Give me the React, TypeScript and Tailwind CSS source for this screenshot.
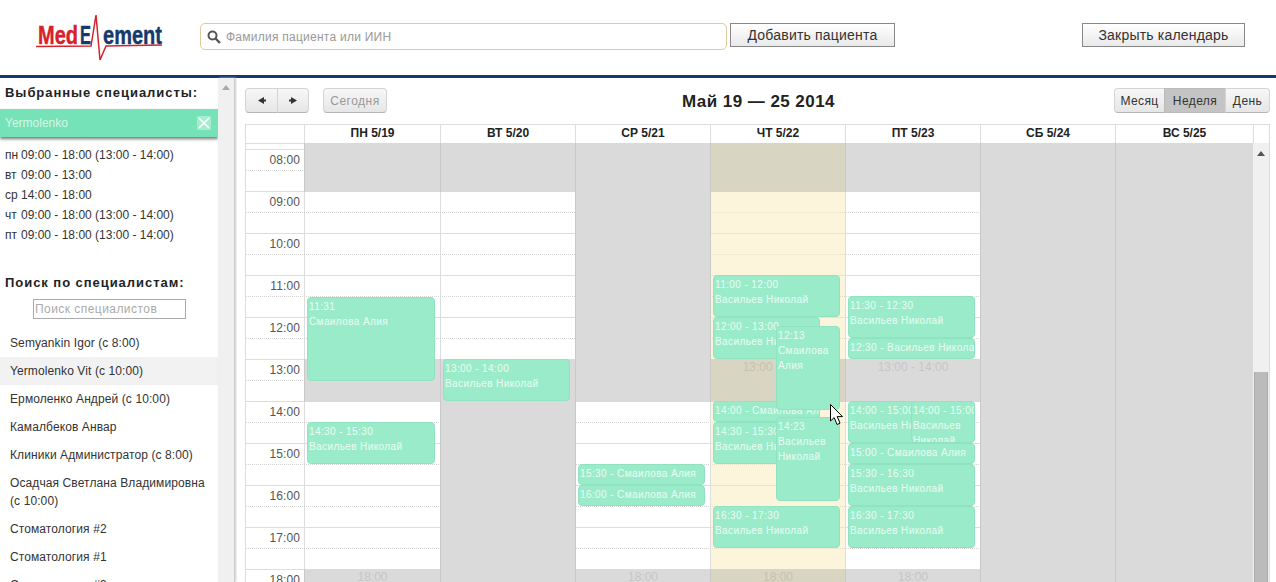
const hours = ["08:00", "09:00", "10:00", "11:00", "12:00", "13:00", "14:00", "15:00", "16:00", "17:00", "18:00"];
const dayNames = ["ПН 5/19", "ВТ 5/20", "СР 5/21", "ЧТ 5/22", "ПТ 5/23", "СБ 5/24", "ВС 5/25"];
const schedule = [
  ["пн", "09:00 - 18:00 (13:00 - 14:00)"],
  ["вт", "09:00 - 13:00"],
  ["ср", "14:00 - 18:00"],
  ["чт", "09:00 - 18:00 (13:00 - 14:00)"],
  ["пт", "09:00 - 18:00 (13:00 - 14:00)"],
];
const doctors = [
  "Semyankin Igor (с 8:00)",
  "Yermolenko Vit (с 10:00)",
  "Ермоленко Андрей (с 10:00)",
  "Камалбеков Анвар",
  "Клиники Администратор (с 8:00)",
  "Осадчая Светлана Владимировна (с 10:00)",
  "Стоматология #2",
  "Стоматология #1",
  "Стоматология #3",
];

// y values are page pixels, the grid body starts at 143
const GRID_TOP = 143;
type Off = { top: number; bottom: number; label?: string };
const offHours: Off[][] = [
  [{ top: 143, bottom: 192 }, { top: 359, bottom: 402, label: "13:00 - 14:00" }, { top: 569, bottom: 582, label: "18:00" }],
  [{ top: 143, bottom: 192 }, { top: 359, bottom: 582 }],
  [{ top: 143, bottom: 402 }, { top: 569, bottom: 582, label: "18:00" }],
  [{ top: 143, bottom: 192 }, { top: 359, bottom: 402, label: "13:00 - 14:00" }, { top: 569, bottom: 582, label: "18:00" }],
  [{ top: 143, bottom: 192 }, { top: 359, bottom: 402, label: "13:00 - 14:00" }, { top: 569, bottom: 582, label: "18:00" }],
  [{ top: 143, bottom: 582 }],
  [{ top: 143, bottom: 582 }],
];

type Ev = { left: number; width: number; top: number; height: number; time: string; name?: string; wrap?: boolean };
const events: Ev[][] = [
  [
    { left: 2, width: 128, top: 297, height: 84, time: "11:31", name: "Смаилова Алия" },
    { left: 2, width: 128, top: 422, height: 42, time: "14:30 - 15:30", name: "Васильев Николай" },
  ],
  [{ left: 2, width: 127, top: 359, height: 42, time: "13:00 - 14:00", name: "Васильев Николай" }],
  [
    { left: 2, width: 127, top: 464, height: 21, time: "15:30 - Смаилова Алия" },
    { left: 2, width: 127, top: 485, height: 21, time: "16:00 - Смаилова Алия" },
  ],
  [
    { left: 2, width: 127, top: 275, height: 42, time: "11:00 - 12:00", name: "Васильев Николай" },
    { left: 2, width: 107, top: 317, height: 42, time: "12:00 - 13:00", name: "Васильев Николай" },
    { left: 2, width: 107, top: 401, height: 21, time: "14:00 - Смаилова Алия" },
    { left: 2, width: 107, top: 422, height: 42, time: "14:30 - 15:30", name: "Васильев Николай" },
    { left: 65, width: 64, top: 326, height: 84, time: "12:13", name: "Смаилова Алия", wrap: true },
    { left: 65, width: 64, top: 417, height: 84, time: "14:23", name: "Васильев Николай", wrap: true },
    { left: 2, width: 127, top: 506, height: 42, time: "16:30 - 17:30", name: "Васильев Николай" },
  ],
  [
    { left: 2, width: 127, top: 296, height: 42, time: "11:30 - 12:30", name: "Васильев Николай" },
    { left: 2, width: 127, top: 338, height: 21, time: "12:30 - Васильев Николай" },
    { left: 2, width: 100, top: 401, height: 42, time: "14:00 - 15:00", name: "Васильев Николай" },
    { left: 65, width: 64, top: 401, height: 42, time: "14:00 - 15:00", name: "Васильев Николай", wrap: true },
    { left: 2, width: 127, top: 443, height: 21, time: "15:00 - Смаилова Алия" },
    { left: 2, width: 127, top: 464, height: 42, time: "15:30 - 16:30", name: "Васильев Николай" },
    { left: 2, width: 127, top: 506, height: 42, time: "16:30 - 17:30", name: "Васильев Николай" },
  ],
  [],
  [],
];

function Logo() {
  return (
    <svg width="134" height="50" viewBox="0 0 134 50" className="shrink-0">
      <path d="M3 33.5 L58 33 L63 2 L67 47 L73 33 L129 32" fill="none" stroke="#d8212a" strokeWidth="1.5" />
      <text x="5" y="31" fontFamily="Liberation Sans" fontWeight="700" fontSize="25" fill="#d8212a" stroke="#d8212a" strokeWidth="0.4" textLength="40" lengthAdjust="spacingAndGlyphs">Med</text>
      <text x="47" y="31" fontFamily="Liberation Sans" fontWeight="700" fontSize="25" fill="#14396c" stroke="#14396c" strokeWidth="0.4" textLength="11" lengthAdjust="spacingAndGlyphs">E</text>
      <text x="70" y="31" fontFamily="Liberation Sans" fontWeight="700" fontSize="25" fill="#14396c" stroke="#14396c" strokeWidth="0.4" textLength="59" lengthAdjust="spacingAndGlyphs">ement</text>
    </svg>
  );
}

function Triangle({ dir }: { dir: "left" | "right" }) {
  return (
    <svg width="8" height="7" viewBox="0 0 8 7">
      <path d={dir === "left" ? "M0 3.5 L6 0 V2.5 H8 V4.5 H6 V7 Z" : "M8 3.5 L2 0 V2.5 H0 V4.5 H2 V7 Z"} fill="#333" />
    </svg>
  );
}

function Sidebar() {
  return (
    <aside className="w-[218px] shrink-0 pt-[7px] text-[12px] text-[#333]">
      <h2 className="pl-[5px] text-[13px] leading-[16px] font-bold tracking-[0.95px] text-[#222]">Выбранные специалисты:</h2>
      <div className="mt-[8px] flex h-[28px] items-center justify-between bg-[#76e2b8] pr-[7px] pl-[5px] text-white/70 shadow-[0_2px_3px_#777]">
        <span>Yermolenko</span>
        <span className="flex h-[14px] w-[14px] items-center justify-center bg-[#a6ecd1]">
          <svg width="12" height="12" viewBox="0 0 12 12">
            <path d="M1 1 L11 11 M11 1 L1 11" stroke="#fff" strokeWidth="1.5" />
          </svg>
        </span>
      </div>
      <div className="mt-[8px] pl-[5px]">
        {schedule.map(([day, time]) => (
          <div key={day} className="flex h-[20px] items-center whitespace-nowrap">
            <span className="w-[16px]">{day}</span>
            <span>{time}</span>
          </div>
        ))}
      </div>
      <h2 className="mt-[30px] pl-[5px] text-[13px] leading-[16px] font-bold tracking-[0.95px] text-[#222]">Поиск по специалистам:</h2>
      <div className="mt-[8px] flex justify-center">
        <input
          readOnly
          placeholder="Поиск специалистов"
          className="ml-[1px] h-[20px] w-[153px] border border-[#aaa] px-[1px] text-[12px] tracking-[0.45px] placeholder:text-[#aaa]"
        />
      </div>
      <ul className="mt-[10px]">
        {doctors.map((d, i) => (
          <li key={d} className={"py-[5px] pl-[10px] leading-[18px] tracking-[0.1px] " + (i === 1 ? "bg-[#f2f2f2]" : "")}>
            {d}
          </li>
        ))}
      </ul>
    </aside>
  );
}

function CalendarToolbar() {
  const btn = "h-[25px] bg-gradient-to-b from-[#f7f7f7] to-[#e6e6e6] border border-[#d4d4d4] border-b-[#b5b5b5] flex items-center justify-center";
  return (
    <div className="relative flex h-[25px] items-start">
      <div className="flex">
        <button className={btn + " w-[33px] rounded-l-[4px]"}><Triangle dir="left" /></button>
        <button className={btn + " -ml-px w-[32px] rounded-r-[4px]"}><Triangle dir="right" /></button>
      </div>
      <button className={btn + " ml-[14px] w-[64px] rounded-[4px] text-[12px] tracking-[0.5px] text-[#999]"}>Сегодня</button>
      <h1 className="flex-1 pl-[16px] text-center text-[17px] leading-[27px] font-bold tracking-[0.45px] text-[#222]">Май 19 — 25 2014</h1>
      <div className="flex text-[12px] tracking-[0.4px] text-[#333]">
        <button className={btn + " w-[51px] rounded-l-[4px]"}>Месяц</button>
        <button className="-ml-px flex h-[25px] w-[62px] items-center justify-center border border-[#bbb] bg-[#c4c4c4]">Неделя</button>
        <button className={btn + " -ml-px w-[45px] rounded-r-[4px]"}>День</button>
      </div>
    </div>
  );
}

function EventCard({ ev }: { ev: Ev }) {
  return (
    <div
      className="absolute overflow-hidden rounded-[4px] border border-[#90e2c1] bg-[#99ebc9] pt-[1px] pl-[1px] text-[10px] leading-[15px] tracking-[0.4px] text-white/80"
      style={{ left: ev.left, width: ev.width, top: ev.top - GRID_TOP, height: ev.height }}
    >
      <div className="whitespace-nowrap">{ev.time}</div>
      {ev.name && <div className={ev.wrap ? "" : "whitespace-nowrap"}>{ev.name}</div>}
    </div>
  );
}

function Calendar() {
  return (
    <div className="mt-[11px] border-x border-t border-[#ddd]">
      <div className="flex h-[18px] text-[12px] leading-[17px] font-bold text-[#222]">
        <div className="w-[59px] shrink-0 border-r border-[#ddd]" />
        <div className="grid grid-cols-[136px_135px_135px_135px_135px_135px_138px]">
          {dayNames.map((n) => (
            <div key={n} className="border-r border-[#ddd] text-center">{n}</div>
          ))}
        </div>
      </div>
      <div className="relative h-[439px] overflow-hidden">
        {/* hour rows */}
        <div className="h-[6px] w-[59px] border-t border-r border-[#ddd]" />
        {hours.map((h) => (
          <div key={h} className="relative h-[42px] border-t border-[#ddd]">
            <div className="h-full w-[59px] border-r border-[#ddd] pr-[4px] text-right text-[12px] leading-[20px] tracking-[0.1px] text-[#555]">{h}</div>
            <div className="absolute top-[20px] right-0 left-0 border-t border-dotted border-[#d4d4d4]" />
          </div>
        ))}
        {/* day columns, on top of the rows */}
        <div className="absolute top-0 bottom-0 left-[59px] grid grid-cols-[136px_135px_135px_135px_135px_135px_138px]">
          {dayNames.map((n, i) => (
            <div key={n} className={"relative border-r border-[#ddd] " + (i === 3 ? "bg-[#f9ecb8]/50" : "")}>
              {offHours[i].map((o) => (
                <div
                  key={o.top}
                  className={
                    "absolute -right-px -left-px border-x border-[#c9c9c9] text-center text-[12px] leading-[17px] " +
                    (i === 3 ? "bg-[#d8d5c3] text-[#c6c2ae]" : "bg-[#dadada] text-[#c6c6c6]")
                  }
                  style={{ top: o.top - GRID_TOP, height: o.bottom - o.top }}
                >
                  {o.label}
                </div>
              ))}
              {events[i].map((ev) => (
                <EventCard key={ev.time + ev.top + ev.left} ev={ev} />
              ))}
            </div>
          ))}
        </div>
        {/* scrollbar */}
        <div className="absolute top-0 right-0 bottom-0 w-[16px] bg-[#f0f0f0]">
          <svg width="8" height="5" viewBox="0 0 8 5" className="absolute top-[8px] left-[4px]">
            <path d="M0 5 L4 0 L8 5 Z" fill="#555" />
          </svg>
          <div className="absolute top-[229px] right-[1px] bottom-0 left-[1px] border-x border-[#aaa] bg-[#bbb]" />
        </div>
      </div>
    </div>
  );
}

export default function App() {
  return (
    <div className="relative h-[582px] w-[1276px] overflow-hidden bg-white font-['Liberation_Sans',Arial,sans-serif]">
      <header className="flex h-[78px] items-start border-b-[3px] border-[#15396f] pt-[13px] pl-[33px]">
        <Logo />
        <div className="mt-[10px] ml-[33px] flex h-[27px] w-[527px] items-center gap-[5px] rounded-[5px] border border-[#dccb9f] pl-[6px]">
          <svg width="14" height="14" viewBox="0 0 14 14">
            <circle cx="5.5" cy="5.5" r="4" fill="none" stroke="#555" strokeWidth="2" />
            <path d="M8.5 8.5 L13 13" stroke="#555" strokeWidth="2.4" />
          </svg>
          <span className="text-[12px] tracking-[0.25px] text-[#999]">Фамилия пациента или ИИН</span>
        </div>
        <button className="mt-[10px] ml-[3px] h-[24px] w-[165px] border border-[#888] bg-gradient-to-b from-white to-[#e9e9e9] text-[14px] tracking-[0.2px] text-[#333]">Добавить пациента</button>
        <button className="mt-[10px] ml-[187px] h-[24px] w-[163px] border border-[#888] bg-gradient-to-b from-white to-[#e9e9e9] text-[14px] tracking-[0.2px] text-[#333]">Закрыть календарь</button>
      </header>
      <div className="flex">
        <Sidebar />
        <div className="relative h-[504px] w-[17px] shrink-0 border-r border-[#ccc] bg-[#f0f0f0] shadow-[1px_0_2px_#ccc]">
          <svg width="8" height="5" viewBox="0 0 8 5" className="absolute top-[7px] left-[4px]">
            <path d="M0 5 L4 0 L8 5 Z" fill="#aaa" />
          </svg>
        </div>
        <main className="ml-[10px] w-[1025px] pt-[10px]">
          <CalendarToolbar />
          <Calendar />
        </main>
      </div>
      {/* mouse pointer in the screenshot */}
      <svg width="14" height="24" viewBox="0 0 14 24" className="absolute top-[404px] left-[830px]">
        <path d="M0.5 0.5 V17 L4.2 13.6 L7 20.5 L10 19.2 L7.2 12.6 H12.5 Z" fill="#fff" stroke="#000" strokeWidth="1" />
      </svg>
    </div>
  );
}
